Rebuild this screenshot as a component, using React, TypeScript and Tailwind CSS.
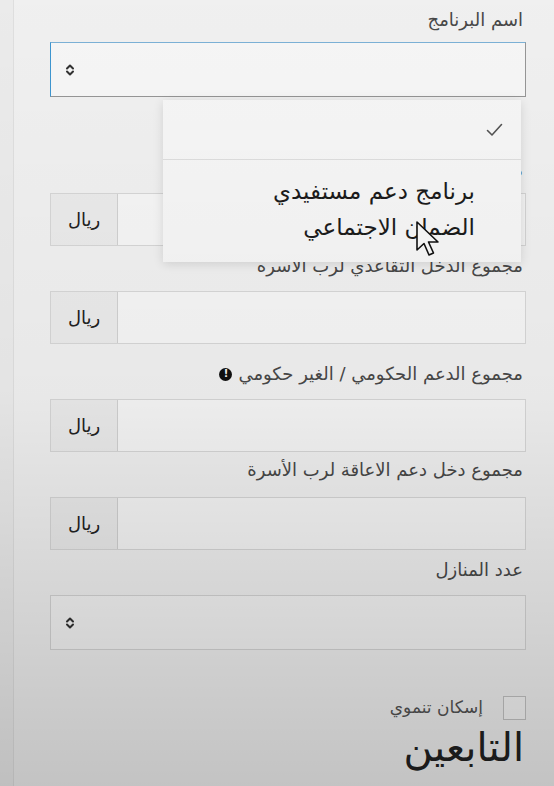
import type { ReactNode } from 'react';

const FONT = { fontFamily: '"DejaVu Sans", "Noto Sans", sans-serif' };

function SortIcon() {
  return (
    <svg width="12" height="14" viewBox="0 0 12 14" fill="none" stroke="#333" strokeWidth="2" strokeLinecap="round" strokeLinejoin="round">
      <path d="M3 5.5 L6 2.5 L9 5.5" />
      <path d="M3 8.5 L6 11.5 L9 8.5" />
    </svg>
  );
}

function Label({ children, className = '' }: { children: ReactNode; className?: string }) {
  return (
    <div className={`flex h-[20px] items-center pr-[3px] text-[18px] leading-[20px] text-[#4a4a4a] ${className}`}>
      {children}
    </div>
  );
}

function RiyalField({ className = '' }: { className?: string }) {
  return (
    <div className={`flex h-[53px] border border-[#dcdcdc] bg-white/60 ${className}`}>
      <div className="flex-1" />
      <div className="flex w-[67px] items-center justify-center border-r border-[#d6d6d6] bg-[#f1f1f1] text-[18px] text-[#222]">
        ريال
      </div>
    </div>
  );
}

function SelectBox({ focused = false, className = '' }: { focused?: boolean; className?: string }) {
  return (
    <div
      className={`flex h-[55px] items-center justify-end border pl-[13px] ${
        focused ? 'border-[#9a9a9a] border-l-[#3f9ad6] border-t-[#7fb6dc] bg-white/70' : 'border-[#dadada] bg-white/50'
      } ${className}`}
    >
      <SortIcon />
    </div>
  );
}

export default function App() {
  return (
    <div dir="rtl" style={FONT} className="relative min-h-[786px] w-[554px] overflow-hidden bg-[#f7f7f7]">
      <div className="absolute left-0 top-0 h-full w-[14px] border-r border-black/5 bg-black/[0.02]" />

      <div className="flex flex-col pl-[50px] pr-[28px] pt-[10px]">
        <Label>اسم البرنامج</Label>
        <SelectBox focused className="mt-[12px]" />

        <Label className="mt-[63px]">مجموع الدخل الشهري لرب الاسرة</Label>
        <RiyalField className="mt-[13px]" />

        <Label className="mt-[10px]">مجموع الدخل التقاعدي لرب الاسره</Label>
        <RiyalField className="mt-[15px]" />

        <Label className="mt-[20px] gap-[6px]">
          <span>مجموع الدعم الحكومي / الغير حكومي</span>
          <span className="flex h-[13px] w-[13px] items-center justify-center rounded-full bg-[#111] text-[10px] font-bold leading-none text-white">
            !
          </span>
        </Label>
        <RiyalField className="mt-[15px]" />

        <Label className="mt-[8px]">مجموع دخل دعم الاعاقة لرب الأسرة</Label>
        <RiyalField className="mt-[17px]" />

        <Label className="mt-[10px]">عدد المنازل</Label>
        <SelectBox className="mt-[15px]" />

        <div className="mt-[45px] flex items-center gap-[20px]">
          <div className="h-[24px] w-[23px] border border-[#c8c8c8] bg-white/60" />
          <span className="text-[17px] text-[#555]">إسكان تنموي</span>
        </div>
        <div className="mt-[2px] pr-[2px] text-[40px] leading-[48px] text-[#222]">التابعين</div>
      </div>

      {/* open select menu */}
      <div className="absolute left-[163px] top-[100px] w-[358px] bg-[#fdfdfd] shadow-[0_2px_10px_rgba(0,0,0,0.12)]">
        <div className="flex h-[60px] items-center border-b border-[#e4e4e4] pr-[18px]">
          <svg width="17" height="14" viewBox="0 0 17 14" fill="none" stroke="#555" strokeWidth="1.6" strokeLinecap="round" strokeLinejoin="round">
            <path d="M1.5 7.5 L6 12 L15.5 1.5" />
          </svg>
        </div>
        <div className="pb-[17px] pr-[46px] pt-[13px] text-[23px] leading-[36px] text-[#1c1c1c]">
          برنامج دعم مستفيدي
          <br />
          الضمان الاجتماعي
        </div>
      </div>

      {/* mouse pointer */}
      <svg className="absolute left-[416px] top-[221px]" width="24" height="38" viewBox="0 0 24 38">
        <path d="M1 1 L1 29 L8 22.5 L13 34 L17.5 32 L12.5 21 L22 21 Z" fill="#fff" stroke="#111" strokeWidth="1.6" strokeLinejoin="round" />
      </svg>

      {/* video-capture shading */}
      <div className="pointer-events-none absolute inset-0 bg-gradient-to-b from-black/[0.03] via-black/[0.06] to-black/[0.21]" />
    </div>
  );
}
